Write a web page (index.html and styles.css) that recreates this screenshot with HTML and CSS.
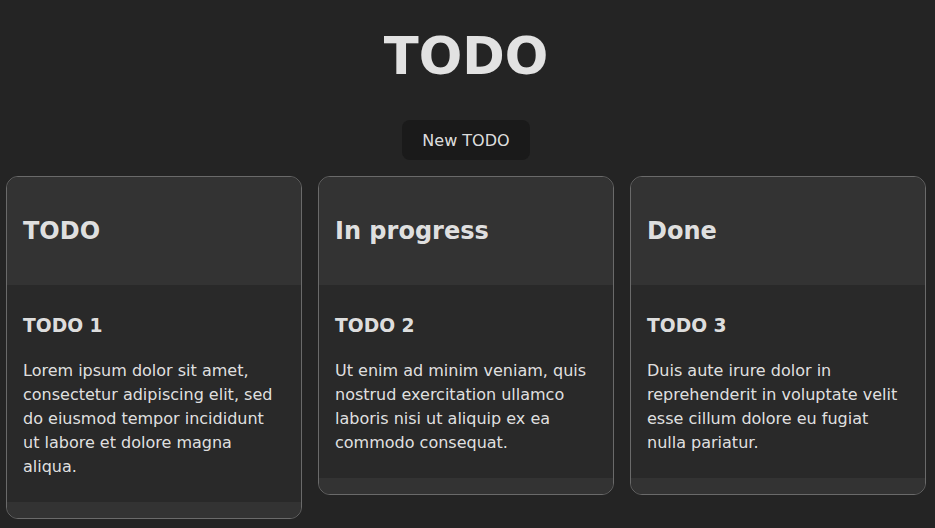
FILE: index.html
```html
<!DOCTYPE html>
<html>
<head>
<meta charset="utf-8">
<link rel="stylesheet" href="styles.css">
</head>
<body>
<div class="app">
  <h1 class="title">TODO</h1>
  <div class="actions"><button class="btn">New TODO</button></div>
  <div class="board">
    <section class="card">
      <header class="card-head"><h2>TODO</h2></header>
      <div class="card-body">
        <h3>TODO 1</h3>
        <p>Lorem ipsum dolor sit amet, consectetur adipiscing elit, sed do eiusmod tempor incididunt ut labore et dolore magna aliqua.</p>
      </div>
      <footer class="card-foot"></footer>
    </section>
    <section class="card">
      <header class="card-head"><h2>In progress</h2></header>
      <div class="card-body">
        <h3>TODO 2</h3>
        <p>Ut enim ad minim veniam, quis nostrud exercitation ullamco laboris nisi ut aliquip ex ea commodo consequat.</p>
      </div>
      <footer class="card-foot"></footer>
    </section>
    <section class="card">
      <header class="card-head"><h2>Done</h2></header>
      <div class="card-body">
        <h3>TODO 3</h3>
        <p>Duis aute irure dolor in reprehenderit in voluptate velit esse cillum dolore eu fugiat nulla pariatur.</p>
      </div>
      <footer class="card-foot"></footer>
    </section>
  </div>
</div>
</body>
</html>
```
FILE: styles.css
```css
html, body {
  margin: 0;
  padding: 0;
}
body {
  background: #242424;
  color: rgba(255, 255, 255, 0.87);
  font-family: "DejaVu Sans", sans-serif;
  font-size: 16px;
  line-height: 1.5;
}
.app {
  padding: 0 9px 0 6px;
}
.title {
  margin: 28px 0 0;
  font-size: 51.2px;
  line-height: 1.1;
  font-weight: bold;
  text-align: center;
}
.actions {
  display: flex;
  justify-content: center;
  margin-top: 35.7px;
}
.btn {
  font-family: "DejaVu Sans", sans-serif;
  font-size: 16px;
  font-weight: 500;
  color: rgba(255, 255, 255, 0.87);
  background: #1a1a1a;
  border: 1px solid transparent;
  border-radius: 8px;
  padding: 9.6px 19.2px;
  line-height: normal;
  cursor: pointer;
}
.board {
  display: flex;
  align-items: flex-start;
  gap: 16px;
  margin-top: 16px;
}
.card {
  width: 296px;
  box-sizing: border-box;
  border: 1px solid #6a6a6a;
  border-radius: 12px;
  overflow: hidden;
  background: #292929;
}
.card-head {
  background: #333333;
  padding: 16px;
}
.card-head h2 {
  margin: 0.83em 0;
  font-size: 24px;
  line-height: 1.5;
  font-weight: bold;
}
.card-body {
  background: #292929;
  padding: 8px 16px 7px;
}
.card-body h3 {
  margin: 18.72px 0;
  font-size: 18.72px;
  line-height: 1.5;
  font-weight: bold;
}
.card-body p {
  margin: 16px 0;
}
.card-foot {
  background: #333333;
  height: 16px;
}
```
